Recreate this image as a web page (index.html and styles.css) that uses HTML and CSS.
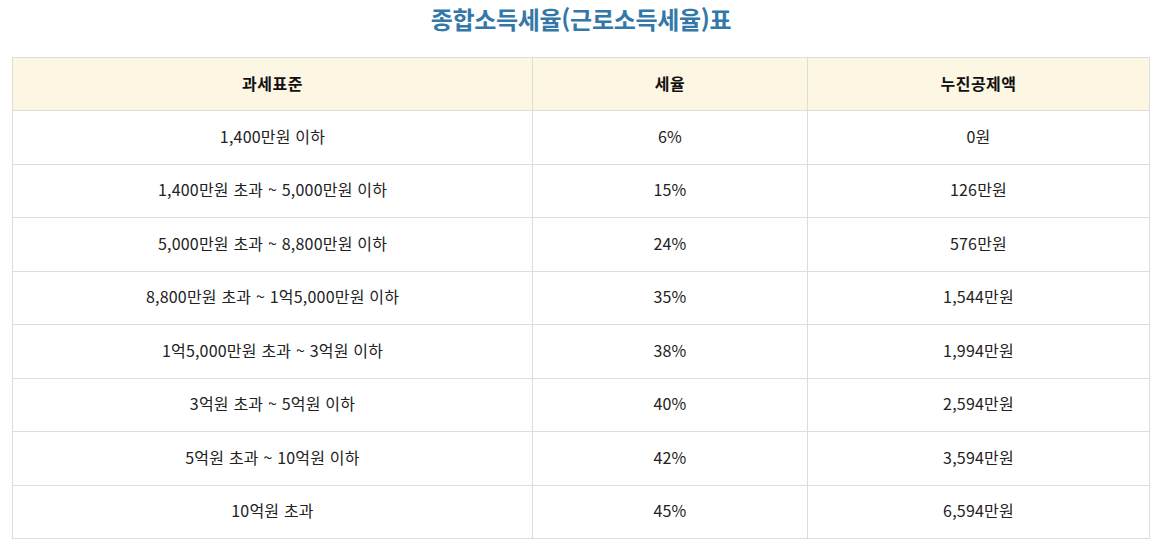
FILE: index.html
```html
<!DOCTYPE html>
<html lang="ko">
<head>
<meta charset="utf-8">
<link rel="stylesheet" href="styles.css">
</head>
<body>
<div class="page">
  <h2 class="title">종합소득세율(근로소득세율)표</h2>
  <table class="tax">
    <thead>
      <tr><th class="c1">과세표준</th><th class="c2">세율</th><th class="c3">누진공제액</th></tr>
    </thead>
    <tbody>
      <tr><td>1,400만원 이하</td><td>6%</td><td>0원</td></tr>
      <tr><td>1,400만원 초과 ~ 5,000만원 이하</td><td>15%</td><td>126만원</td></tr>
      <tr><td>5,000만원 초과 ~ 8,800만원 이하</td><td>24%</td><td>576만원</td></tr>
      <tr><td>8,800만원 초과 ~ 1억5,000만원 이하</td><td>35%</td><td>1,544만원</td></tr>
      <tr><td>1억5,000만원 초과 ~ 3억원 이하</td><td>38%</td><td>1,994만원</td></tr>
      <tr><td>3억원 초과 ~ 5억원 이하</td><td>40%</td><td>2,594만원</td></tr>
      <tr><td>5억원 초과 ~ 10억원 이하</td><td>42%</td><td>3,594만원</td></tr>
      <tr><td>10억원 초과</td><td>45%</td><td>6,594만원</td></tr>
    </tbody>
  </table>
</div>
</body>
</html>
```
FILE: styles.css
```css
html, body {
  margin: 0;
  padding: 0;
  background: #ffffff;
}
.page {
  padding: 0 7px 0 12px;
  font-family: "Noto Sans CJK KR", "Noto Sans", sans-serif;
  color: #222222;
}
.title {
  margin: 0;
  height: 57px;
  box-sizing: border-box;
  padding-top: 3px;
  text-align: center;
  font-size: 24px;
  font-weight: 700;
  line-height: 32px;
  letter-spacing: -0.3px;
  color: #3378a8;
}
.tax {
  width: 100%;
  border-collapse: collapse;
  table-layout: fixed;
  font-size: 16px;
}
.tax th, .tax td {
  border: 1px solid #dddddd;
  text-align: center;
  vertical-align: middle;
  padding: 0 0 3px 0;
  height: 49.5px;
  letter-spacing: 0.2px;
}
.tax th {
  background: #fdf6e3;
  font-weight: 700;
  color: #111111;
  height: 49px;
  letter-spacing: 0.5px;
}
.tax td {
  font-weight: 400;
  color: #222222;
}
.c1 { width: 519px; }
.c2 { width: 274px; }
```
